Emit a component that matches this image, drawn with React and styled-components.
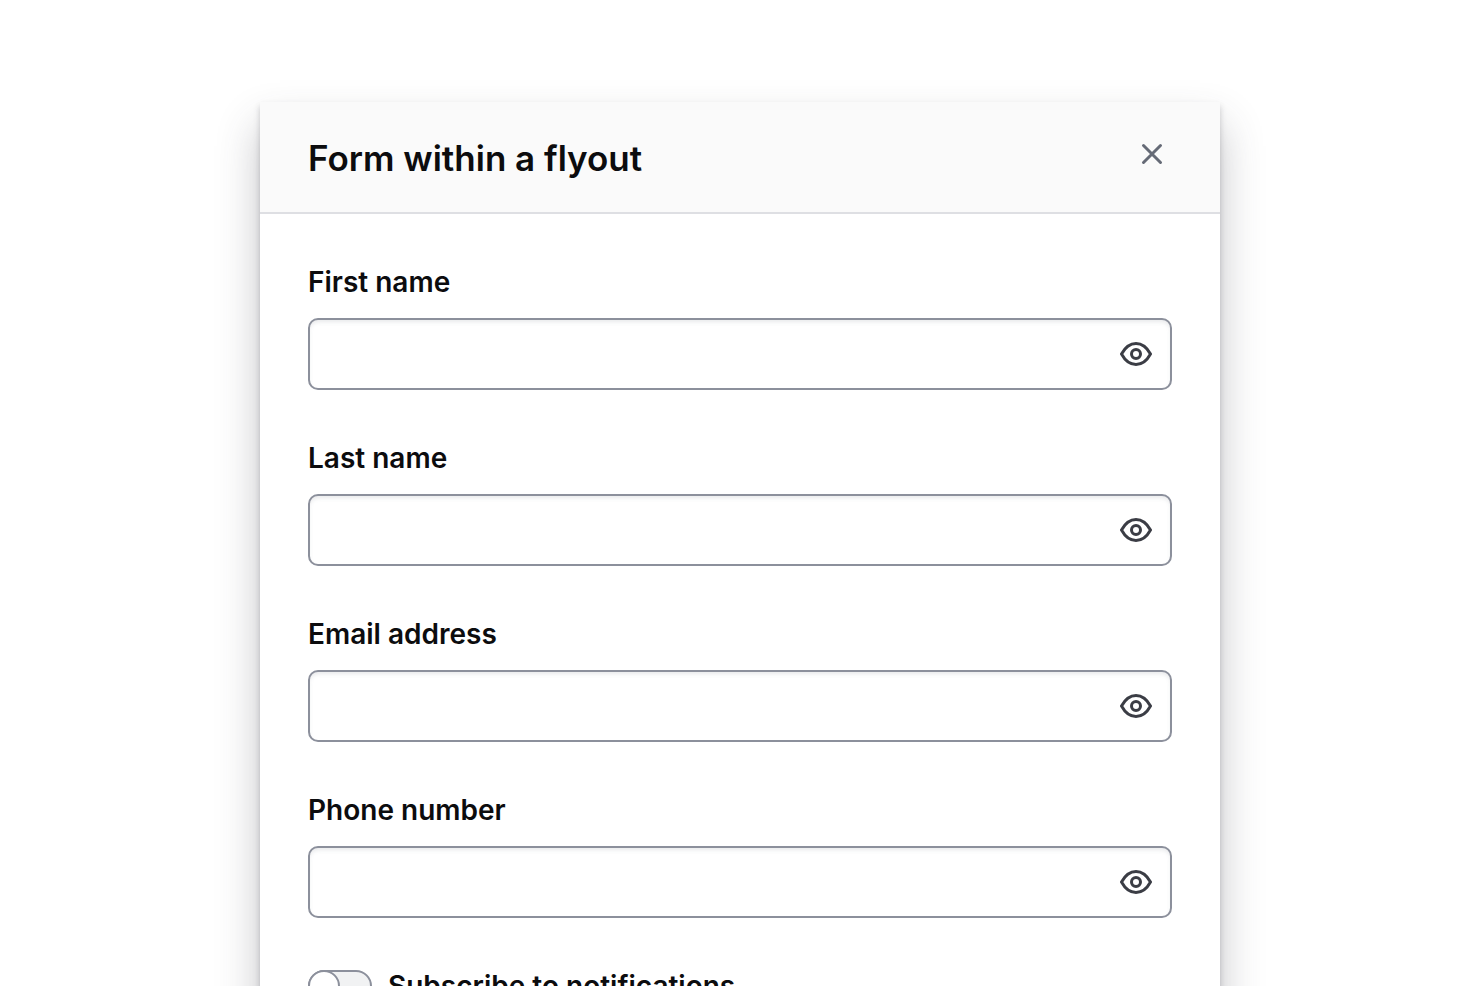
import React, { useState } from "react";
import styled, { createGlobalStyle } from "styled-components";

const GlobalStyle = createGlobalStyle`
  *, *::before, *::after { box-sizing: border-box; }
  body {
    margin: 0;
    background: #ffffff;
    color: #0c0c0e;
    font-family: Inter, "Liberation Sans", sans-serif;
  }
`;

const Stage = styled.div`
  display: flex;
  justify-content: center;
  height: 100vh;
  padding: 102px 24px 0;
  overflow: hidden;
`;

const Flyout = styled.section`
  flex: 0 1 960px;
  height: 150vh;
  background: #ffffff;
  box-shadow: 0 4px 6px rgba(59, 61, 69, 0.25), 0 24px 40px rgba(59, 61, 69, 0.3);
`;

const Header = styled.header`
  display: flex;
  align-items: flex-start;
  justify-content: space-between;
  padding: 32px 48px 30px;
  background: #fafafa;
  border-bottom: 2px solid #dedfe3;
`;

const Title = styled.h1`
  margin: 0;
  font-size: 35px;
  font-weight: 600;
  line-height: 48px;
`;

const IconButton = styled.button`
  display: flex;
  align-items: center;
  justify-content: center;
  width: 40px;
  height: 40px;
  padding: 0;
  border: 0;
  background: transparent;
  color: ${(p) => p.$color};
  cursor: pointer;
`;

const Icon = styled.svg`
  display: block;
  width: 32px;
  height: 32px;
  fill: none;
  stroke: currentColor;
  stroke-width: 1.5;
  stroke-linecap: round;
  stroke-linejoin: round;
`;

const Form = styled.form`
  display: flex;
  flex-direction: column;
  gap: 48px;
  padding: 48px;
`;

const Field = styled.div`
  display: flex;
  flex-direction: column;
  gap: 16px;
`;

const Label = styled.label`
  font-size: 28px;
  font-weight: 600;
  line-height: 40px;
`;

const InputBox = styled.div`
  display: flex;
  align-items: center;
  height: 72px;
  padding: 0 14px;
  border: 2px solid #8c909c;
  border-radius: 10px;
  background: #ffffff;
  box-shadow: inset 0 3px 4px -1px rgba(101, 106, 118, 0.15);
`;

const TextInput = styled.input`
  flex: 1;
  min-width: 0;
  height: 40px;
  padding: 0;
  border: 0;
  outline: 0;
  background: transparent;
  font: inherit;
  font-size: 28px;
`;

const ToggleRow = styled.div`
  display: flex;
  align-items: center;
  gap: 16px;
`;

const Toggle = styled.input`
  appearance: none;
  display: flex;
  width: 64px;
  height: 32px;
  margin: 0;
  border: 2px solid #8c909c;
  border-radius: 16px;
  background: #f1f2f3;
  cursor: pointer;

  &::before {
    content: "";
    width: 32px;
    height: 32px;
    margin: -2px;
    border: 2px solid #8c909c;
    border-radius: 50%;
    background: #ffffff;
  }

  &:checked {
    justify-content: flex-end;
    background: #1060ff;
  }
`;

const fields = [
  { id: "first-name", label: "First name" },
  { id: "last-name", label: "Last name" },
  { id: "email", label: "Email address" },
  { id: "phone", label: "Phone number" },
];

function EyeIcon() {
  return (
    <Icon viewBox="0 0 16 16" aria-hidden="true">
      <path d="M.75 8C2.5 4.8 5 2.75 8 2.75S13.5 4.8 15.25 8C13.5 11.2 11 13.25 8 13.25S2.5 11.2 .75 8Z" />
      <circle cx="8" cy="8" r="2.25" />
    </Icon>
  );
}

function CloseIcon() {
  return (
    <Icon viewBox="0 0 16 16" aria-hidden="true">
      <path d="M3.75 3.75l8.5 8.5M12.25 3.75l-8.5 8.5" />
    </Icon>
  );
}

function TextField({ id, label }) {
  const [hidden, setHidden] = useState(false);
  return (
    <Field>
      <Label htmlFor={id}>{label}</Label>
      <InputBox>
        <TextInput id={id} type={hidden ? "password" : "text"} />
        <IconButton
          type="button"
          $color="#3b3d45"
          aria-label={`Toggle visibility of ${label}`}
          onClick={() => setHidden(!hidden)}
        >
          <EyeIcon />
        </IconButton>
      </InputBox>
    </Field>
  );
}

export default function App() {
  return (
    <>
      <GlobalStyle />
      <Stage>
        <Flyout role="dialog" aria-labelledby="flyout-title">
          <Header>
            <Title id="flyout-title">Form within a flyout</Title>
            <IconButton type="button" $color="#656a76" aria-label="Dismiss">
              <CloseIcon />
            </IconButton>
          </Header>
          <Form>
            {fields.map((f) => (
              <TextField key={f.id} {...f} />
            ))}
            <ToggleRow>
              <Toggle type="checkbox" role="switch" id="subscribe" />
              <Label htmlFor="subscribe">Subscribe to notifications</Label>
            </ToggleRow>
          </Form>
        </Flyout>
      </Stage>
    </>
  );
}
